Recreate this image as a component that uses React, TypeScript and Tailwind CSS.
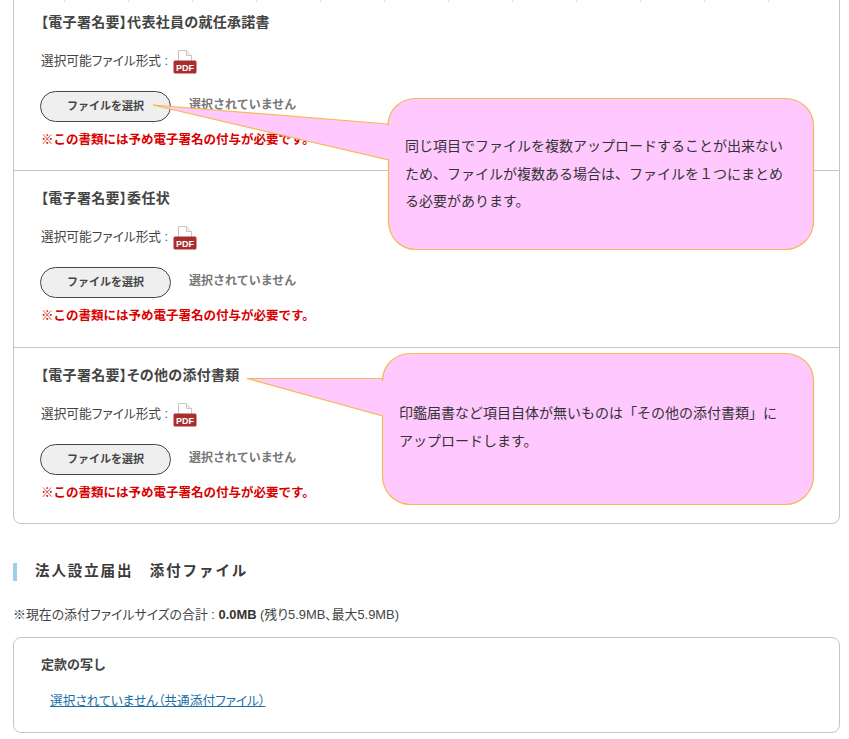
import React from 'react';

const font = { fontFamily: '"Liberation Sans", "Noto Sans CJK JP", sans-serif' };

const PdfIcon: React.FC = () => (
  <svg width="24" height="24" viewBox="0 0 24 24" className="shrink-0">
    <path d="M5.500 0.500H13.500L18.500 5.500V12H5.500Z" fill="#fff" stroke="#c8c8c8" />
    <path d="M13.500 0.500V5.500H18.500" fill="#f0f0f0" stroke="#c8c8c8" />
    <rect x="0.500" y="10.500" width="23" height="13" rx="1.500" fill="#a92f2f" />
    <text x="12" y="20.500" textAnchor="middle" fontSize="9" fontWeight="700" fill="#fff" fontFamily="Liberation Sans, sans-serif">
      PDF
    </text>
  </svg>
);

const UploadRow: React.FC<{ title: string; height: string; divider?: boolean }> = ({ title, height, divider }) => (
  <section className={`${height} pl-[27px] pt-[17px] ${divider ? 'border-b border-[#c4c4c4]' : ''}`}>
    <h3 className="text-[14px] leading-[20px] font-bold tracking-[0.300px] text-[#444] [font-feature-settings:'palt']">{title}</h3>
    <div className="mt-[17px] flex h-[26px] items-center gap-[5px] text-[12.700px] text-[#444] [font-feature-settings:'palt']">
      <span>選択可能ファイル形式 :</span>
      <PdfIcon />
    </div>
    <div className="mt-[16px] -ml-px flex items-center gap-[18px]">
      <button className="h-[31px] w-[131px] rounded-full border border-[#444] bg-[#efefef] text-[11px] font-bold text-[#444]">
        ファイルを選択
      </button>
      <span className="mb-[3px] text-[12px] font-bold text-[#777]">選択されていません</span>
    </div>
    <p className="mt-[8px] text-[12.500px] leading-[20px] font-bold text-[#d80000]">※この書類には予め電子署名の付与が必要です。</p>
  </section>
);

export default function App() {
  return (
    <div className="relative h-[739px] w-[849px] overflow-hidden bg-white" style={font}>
      <div className="flex h-[2px] pl-[64px]">
        {[0, 1, 2, 3, 4, 5, 6, 7, 8, 9, 10, 11].map((i) => (
          <div key={i} className="h-[2px] w-[64px] border-l border-[#dddddd]" />
        ))}
      </div>
      <div className="ml-[13px] w-[827px] -mt-[8px] h-[530px] rounded-b-lg border border-[#c4c4c4]">
        <UploadRow title="【電子署名要】代表社員の就任承諾書" height="h-[176px]" divider />
        <UploadRow title="【電子署名要】委任状" height="h-[177px]" divider />
        <UploadRow title="【電子署名要】その他の添付書類" height="h-[175px]" />
      </div>

      <h2 className="mt-[39px] ml-[13px] flex h-[18px] items-center border-l-4 border-[#9dd0e8] pl-[18px] text-[14.500px] font-bold tracking-[1.900px] text-[#3a3a3a]">
        法人設立届出　添付ファイル
      </h2>
      <p className="mt-[24px] ml-[13px] text-[12.900px] leading-[20px] text-[#444] [font-feature-settings:'palt']">
        ※現在の添付ファイルサイズの合計 : <b className="font-bold text-[#333]">0.0MB</b> (残り5.9MB、最大5.9MB)
      </p>
      <div className="mt-[12px] ml-[13px] h-[96px] w-[827px] rounded-lg border border-[#c4c4c4] pl-[27px] pt-[17px]">
        <h3 className="text-[13px] leading-[20px] font-bold text-[#444]">定款の写し</h3>
        <a href="#" className="mt-[16px] ml-[9px] block text-[12.700px] leading-[20px] text-[#1a6fa8] underline [font-feature-settings:'palt']">
          選択されていません（共通添付ファイル）
        </a>
      </div>

      {/* callouts on top of the form */}
      <svg className="absolute left-0 top-0" width="849" height="739">
        <path
          d="M153 105L388 124V126C388 110 400 98.500 416 98.500H785C801 98.500 813.500 110 813.500 126V221C813.500 237 801 249.500 785 249.500H416C400 249.500 388.500 237 388.500 221V160Z"
          fill="#ffc9ff"
          stroke="#f4b950"
          strokeWidth="1.200"
        />
        <path
          d="M247 378.500H382.500V381C382.500 365 395 353.500 411 353.500H785C801 353.500 813.500 365 813.500 381V476C813.500 492 801 504.500 785 504.500H411C395 504.500 382.500 492 382.500 476V416Z"
          fill="#ffc9ff"
          stroke="#f4b950"
          strokeWidth="1.200"
        />
      </svg>
      <p className="absolute left-[405px] top-[133px] w-[385px] text-[14px] leading-[27.500px] text-[#333]">
        同じ項目でファイルを複数アップロードすることが出来ないため、ファイルが複数ある場合は、ファイルを１つにまとめる必要があります。
      </p>
      <p className="absolute left-[399px] top-[400px] w-[385px] text-[14px] leading-[27.500px] text-[#333]">
        印鑑届書など項目自体が無いものは「その他の添付書類」にアップロードします。
      </p>
    </div>
  );
}
